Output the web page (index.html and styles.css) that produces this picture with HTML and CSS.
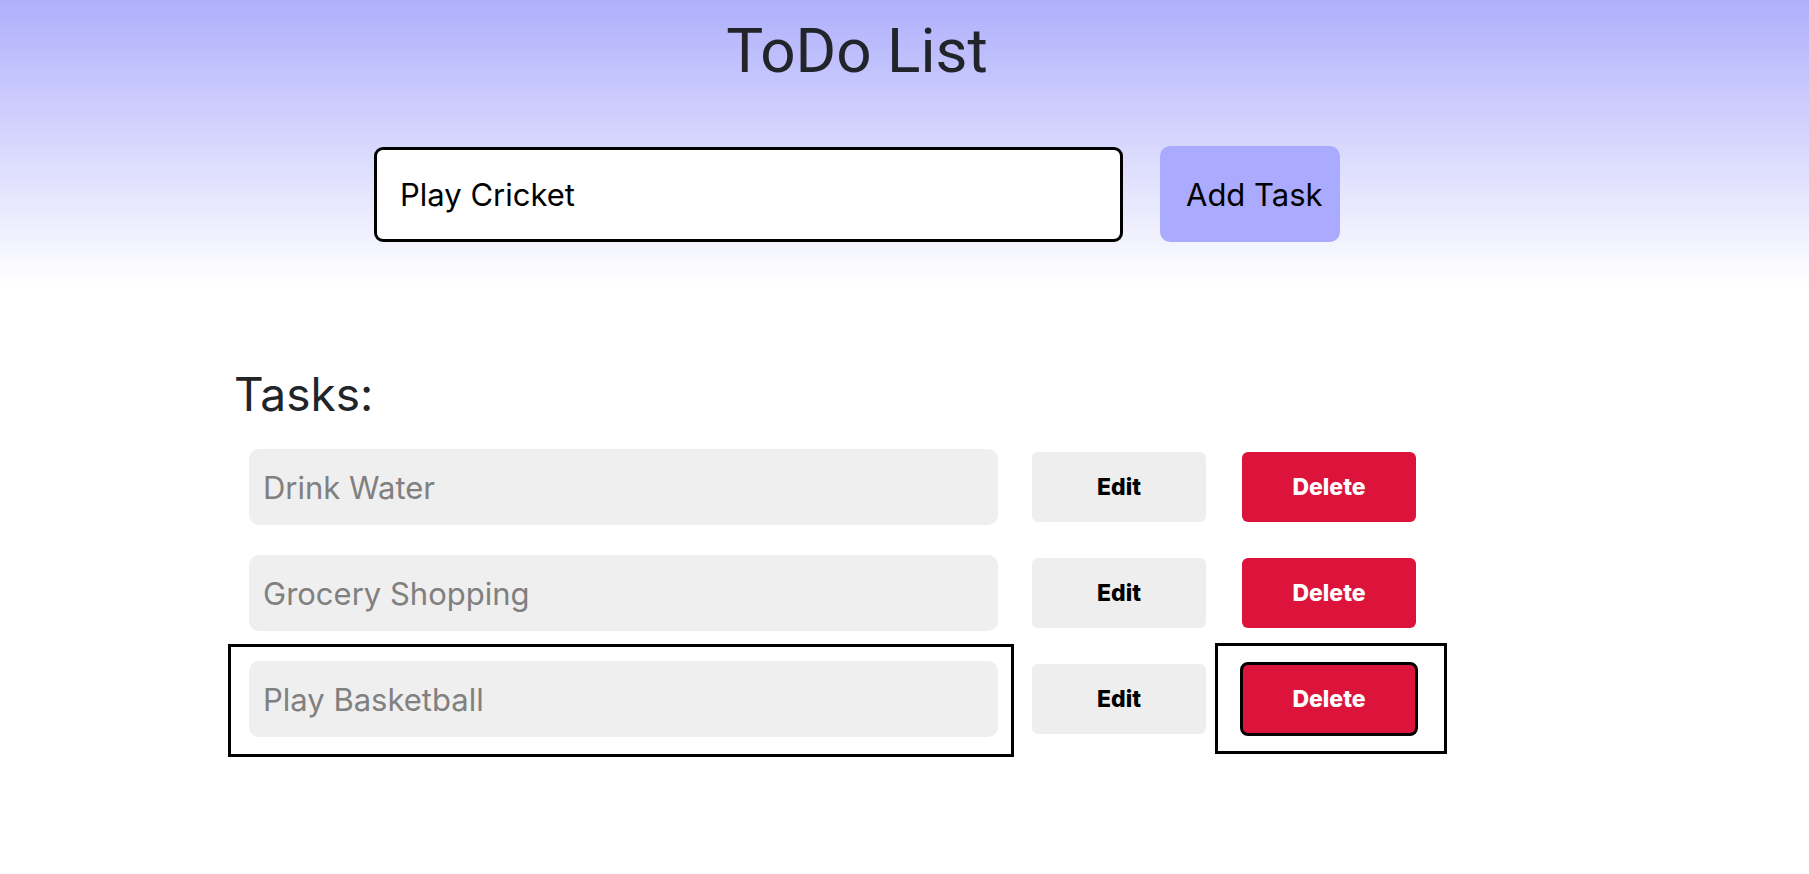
FILE: index.html
```html
<!DOCTYPE html>
<html lang="en">
<head>
<meta charset="utf-8">
<title>ToDo List</title>
<link rel="stylesheet" href="styles.css">
</head>
<body>
<div class="page">
  <header class="hero">
    <h1 class="title">ToDo List</h1>
    <div class="add-row">
      <input class="task-input" type="text" value="Play Cricket">
      <button class="add-btn">Add Task</button>
    </div>
  </header>
  <section class="tasks">
    <h2 class="tasks-title">Tasks:</h2>
    <ul class="task-list">
      <li class="task-row">
        <div class="task-text">Drink Water</div>
        <button class="edit-btn">Edit</button>
        <span class="del-wrap"><button class="del-btn">Delete</button></span>
      </li>
      <li class="task-row">
        <div class="task-text">Grocery Shopping</div>
        <button class="edit-btn">Edit</button>
        <span class="del-wrap"><button class="del-btn">Delete</button></span>
      </li>
      <li class="task-row">
        <div class="task-text is-outlined">Play Basketball</div>
        <button class="edit-btn">Edit</button>
        <span class="del-wrap is-outlined"><button class="del-btn is-active">Delete</button></span>
      </li>
    </ul>
  </section>
</div>
</body>
</html>
```

FILE: styles.css
```css
* { box-sizing: border-box; }

html, body {
  margin: 0;
  padding: 0;
  background: #ffffff;
}

body {
  font-family: Inter, "Noto Sans", sans-serif;
  color: #212529;
}

.page {
  width: 1714px;
}

.hero {
  width: 1809px;
  padding: 14px 95px 48px 0;
  background: linear-gradient(to bottom, rgb(175, 175, 252) 0px, rgb(255, 255, 255) 285px);
}

.title {
  margin: 0;
  text-align: center;
  font-family: Roboto, "Liberation Sans", sans-serif;
  font-weight: 400;
  font-size: 62px;
  line-height: 74px;
  color: #212529;
}

.add-row {
  margin-top: 58px;
  display: flex;
  justify-content: center;
  align-items: center;
  gap: 37px;
}

.task-input {
  width: 749px;
  height: 95px;
  border: 3px solid #000;
  border-radius: 9px;
  background: #fff;
  padding: 0 0 0 23px;
  font-family: Inter, "Noto Sans", sans-serif;
  font-size: 31px;
  color: #000;
  outline: none;
}

.add-btn {
  width: 180px;
  height: 96px;
  border: none;
  border-radius: 10px;
  background: #aaaaff;
  padding: 0 10px 0 26px;
  text-align: left;
  font-family: Inter, "Noto Sans", sans-serif;
  font-size: 31px;
  color: #000;
}

.tasks {
  padding: 78px 0 0 234px;
}

.tasks-title {
  margin: 0;
  font-family: Inter, "Noto Sans", sans-serif;
  font-weight: 400;
  font-size: 46px;
  line-height: 53px;
  color: #212529;
}

.task-list {
  list-style: none;
  margin: 28px 0 0;
  padding: 0 0 0 15px;
}

.task-row {
  display: flex;
  align-items: center;
  height: 76px;
  margin-bottom: 30px;
}

.task-text {
  position: relative;
  width: 749px;
  height: 76px;
  margin-right: 34px;
  display: flex;
  align-items: center;
  padding-left: 14px;
  background: #efefef;
  border-radius: 10px;
  font-size: 31px;
  color: #808080;
}

.task-text.is-outlined::after {
  content: "";
  position: absolute;
  top: -17px;
  right: -16px;
  bottom: -20px;
  left: -21px;
  border: 3px solid #000;
}

.edit-btn,
.del-btn {
  width: 174px;
  height: 70px;
  border: none;
  border-radius: 6px;
  font-family: Inter, "Noto Sans", sans-serif;
  font-weight: 800;
  font-size: 23px;
  padding: 0;
}

.edit-btn {
  background: #eeeeee;
  color: #000;
  margin-right: 36px;
}

.del-wrap {
  position: relative;
  display: inline-flex;
}

.del-btn {
  background: #dc143c;
  color: #fff;
}

.del-btn.is-active {
  border: 3px solid #000;
  border-radius: 8px;
  width: 178px;
  height: 74px;
  margin: -2px;
}

.del-wrap.is-outlined::after {
  content: "";
  position: absolute;
  top: -21px;
  right: -31px;
  bottom: -20px;
  left: -27px;
  border: 3px solid #000;
}
```
